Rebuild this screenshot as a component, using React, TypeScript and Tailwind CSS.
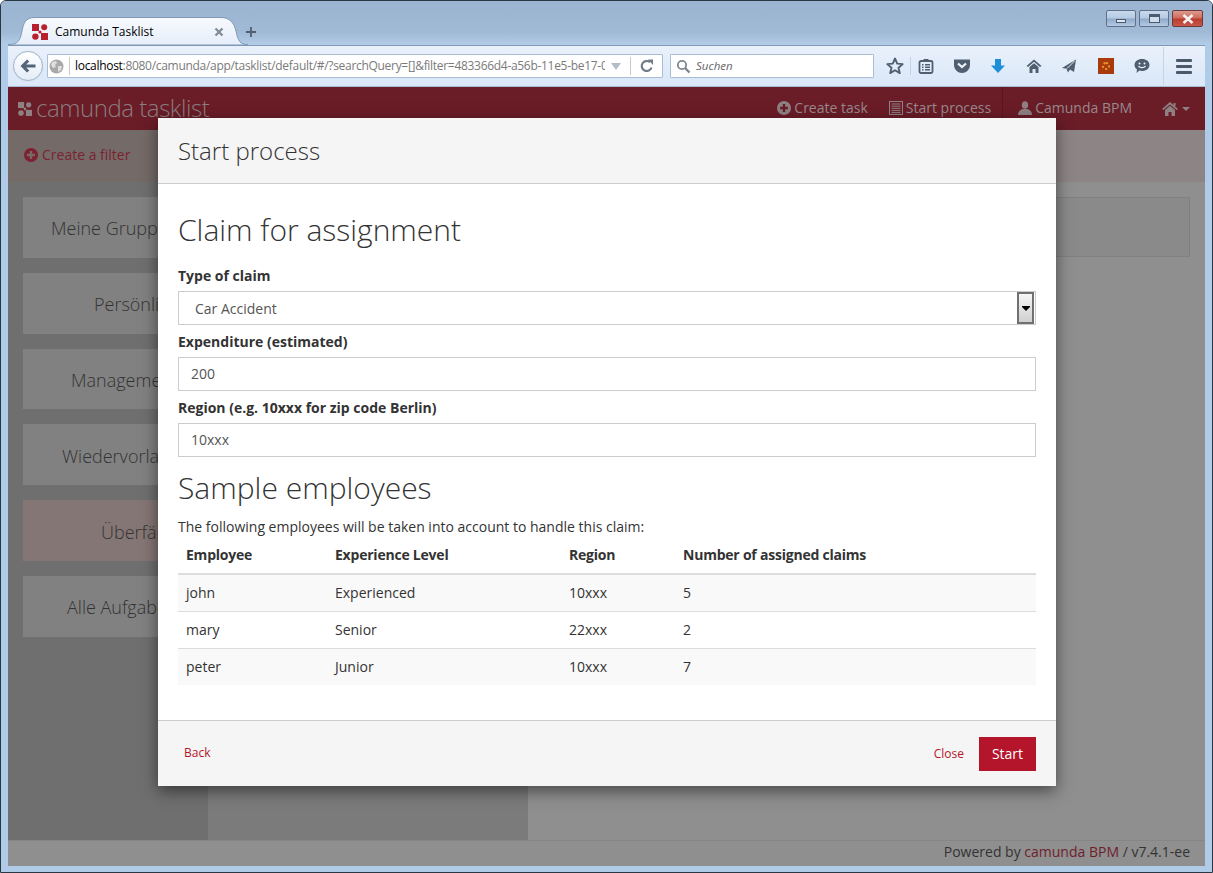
import React from "react";

const sans = "font-['Open_Sans','Noto_Sans',sans-serif]";

function Logo({ size, color }: { size: number; color: string }) {
  return (
    <svg width={size} height={size} viewBox="0 0 16 16" className="shrink-0">
      <rect x="0" y="0" width="7" height="7" fill={color} />
      <circle cx="12.2" cy="3.2" r="3" fill={color} />
      <circle cx="8" cy="8" r="1.6" fill={color} />
      <circle cx="3.4" cy="12.6" r="3.2" fill={color} />
      <rect x="9" y="9" width="7" height="7" fill={color} />
    </svg>
  );
}

function WinButton({ kind }: { kind: "min" | "max" | "close" }) {
  const bg =
    kind === "close"
      ? "bg-[linear-gradient(#dd9a8e_0%,#cf6a5a_48%,#b83c2e_52%,#c9584a_100%)] border-[#6c3a3a]"
      : "bg-[linear-gradient(#c9d9ec_0%,#b5cae2_48%,#8fa9c8_52%,#b3cae4_100%)] border-[#5f7089]";
  return (
    <div className={`flex items-center justify-center h-[17px] border rounded-[2px] ${bg} ${kind === "close" ? "w-[31px]" : "w-[30px]"}`}>
      {kind === "min" && <div className="w-[10px] h-[4px] mt-[4px] bg-[#dfe7f0] border border-[#4c5a6e]" />}
      {kind === "max" && <div className="w-[11px] h-[9px] bg-[#cfdcea] border border-[#4c5a6e] border-t-[3px]" />}
      {kind === "close" && (
        <svg width="12" height="10" viewBox="0 0 12 10">
          <path d="M1.5 1 L10.5 9 M10.5 1 L1.5 9" stroke="#f3f3f3" strokeWidth="2.6" />
        </svg>
      )}
    </div>
  );
}

function ToolIcons() {
  const c = "#4f5f70";
  return (
    <div className="flex items-center h-full relative">
      <svg width="18" height="18" viewBox="0 0 18 18" className="ml-[12px]">
        <path d="M9 1.5 L11.2 6.6 L16.7 7.1 L12.5 10.7 L13.8 16.1 L9 13.2 L4.2 16.1 L5.5 10.7 L1.3 7.1 L6.8 6.6 Z" fill="none" stroke={c} strokeWidth="1.9" strokeLinejoin="round" />
      </svg>
      <div className="w-px h-[18px] bg-[#c3d2e3] ml-[6px]" />
      <svg width="16" height="16" viewBox="0 0 16 16" className="ml-[7px]">
        <rect x="1.5" y="3" width="13" height="12" rx="1.5" fill="none" stroke={c} strokeWidth="1.8" />
        <rect x="5.5" y="1" width="5" height="3" fill={c} />
        <path d="M4 6.8h1.5M7 6.8h5M4 9.3h1.5M7 9.3h5M4 11.8h1.5M7 11.8h5" stroke={c} strokeWidth="1.4" />
      </svg>
      <svg width="18" height="16" viewBox="0 0 18 16" className="ml-[19px]">
        <path d="M1 1.5 H17 V7 C17 11.5 13 15 9 15 C5 15 1 11.5 1 7 Z" fill={c} />
        <path d="M5 5.5 L9 9 L13 5.5" fill="none" stroke="#eef4fb" strokeWidth="2.2" />
      </svg>
      <svg width="16" height="16" viewBox="0 0 16 16" className="ml-[19px]">
        <path d="M5 1 H11 V7.5 H15 L8 15 L1 7.5 H5 Z" fill="#1c8fd6" />
      </svg>
      <svg width="16" height="16" viewBox="0 0 16 16" className="ml-[20px]">
        <path d="M8 1.5 L15.5 8 L14 9 L8 3.8 L2 9 L0.5 8 Z" fill={c} />
        <path d="M3.5 9 L8 5.2 L12.5 9 V15 H9.5 V11 H6.5 V15 H3.5 Z" fill={c} />
      </svg>
      <svg width="16" height="16" viewBox="0 0 16 16" className="ml-[19px]">
        <path d="M15 1.5 L1 10 L5.5 10.8 L7 14.5 L9 11.5 L13 14 Z" fill={c} />
        <path d="M13.5 3 L6 10.5" stroke="#e4edf8" strokeWidth="1" />
      </svg>
      <div className="w-[16px] h-[16px] ml-[21px] bg-[#a83a0c] flex items-center justify-center">
        <div className="w-[8px] h-[8px] rounded-full border-2 border-dotted border-[#e8982c]" />
      </div>
      <svg width="16" height="16" viewBox="0 0 16 16" className="ml-[20px]">
        <path d="M8 1 C12.4 1 15.5 3.6 15.5 7 C15.5 10.4 12.4 13 8 13 C7 13 6.2 12.9 5.5 12.6 L2.5 15 L3 11.5 C1.4 10.4 0.5 8.8 0.5 7 C0.5 3.6 3.6 1 8 1 Z" fill={c} />
        <circle cx="5.5" cy="5.5" r="1" fill="#eef4fb" />
        <circle cx="10.5" cy="5.5" r="1" fill="#eef4fb" />
        <path d="M4.5 8 C6 10.2 10 10.2 11.5 8" fill="none" stroke="#eef4fb" strokeWidth="1.3" />
      </svg>
      <div className="w-px h-[38px] bg-[#c6d5e6] ml-[13px]" />
      <div className="flex flex-col gap-[3px] ml-[12px]">
        <div className="w-[16px] h-[3px] rounded-[1px] bg-[#4a5a6b]" />
        <div className="w-[16px] h-[3px] rounded-[1px] bg-[#4a5a6b]" />
        <div className="w-[16px] h-[3px] rounded-[1px] bg-[#4a5a6b]" />
      </div>
    </div>
  );
}

function Toolbar() {
  return (
    <div className="h-[42px] shrink-0 flex items-center relative bg-[linear-gradient(#eaf1fb,#d9e7f8)] border-t border-t-[#7e98b6] border-b border-b-[#a6bad3] text-[12px]">
      <div className="flex items-center w-[616px] h-[24px] ml-[39px] bg-white border border-[#a9bed5] rounded-[1px] relative shrink-0 overflow-hidden">
        <svg width="15" height="15" viewBox="0 0 15 15" className="ml-[1px] shrink-0">
          <circle cx="7.5" cy="7.5" r="7" fill="#a9a9a9" />
          <path d="M3 3 L7 2 L8 4 L6 6 L7 8 L4 9 L2 6 Z M9 7 L13 7 L12 11 L9 13 Z" fill="#dedede" />
        </svg>
        <div className="w-px h-[18px] bg-[#c9c9c9] ml-[5px] shrink-0" />
        <div className={`${sans} ml-[5px] w-[530px] whitespace-nowrap overflow-hidden text-[#7a7a7a] tracking-[-0.3px]`}>
          <span className="text-black">localhost</span>:8080/camunda/app/tasklist/default/#/?searchQuery=[]&amp;filter=483366d4-a56b-11e5-be17-0
        </div>
        <svg width="10" height="7" viewBox="0 0 10 7" className="ml-[6px] shrink-0">
          <path d="M0 0 H10 L5 7 Z" fill="#b5bec8" />
        </svg>
        <div className="w-px h-[18px] bg-[#c9c9c9] ml-[9px] shrink-0" />
        <svg width="14" height="14" viewBox="0 0 14 14" className="ml-[9px] shrink-0">
          <path d="M11.5 8.5 A5 5 0 1 1 10 3.2" fill="none" stroke="#6f7b87" strokeWidth="2.2" />
          <path d="M8 0.5 L13 0.5 L13 6 Z" fill="#6f7b87" />
        </svg>
      </div>
      <div className="flex items-center w-[204px] h-[24px] ml-[7px] bg-white border border-[#a9bed5] rounded-[1px] shrink-0">
        <svg width="15" height="15" viewBox="0 0 15 15" className="ml-[5px]">
          <circle cx="6" cy="6" r="4.2" fill="none" stroke="#7d8590" strokeWidth="1.8" />
          <path d="M9 9 L13.5 13.5" stroke="#7d8590" strokeWidth="2.4" />
        </svg>
        <span className={`${sans} italic text-[#666] ml-[5px] text-[11.5px]`}>Suchen</span>
      </div>
      <ToolIcons />
      <div className="absolute left-[5px] top-[5px] w-[30px] h-[30px] rounded-full bg-[linear-gradient(#ffffff,#e3ecf7)] border border-[#a4b5c8] flex items-center justify-center shadow-[0_0_1px_rgba(0,0,0,0.2)]">
        <svg width="16" height="14" viewBox="0 0 16 14">
          <path d="M7 0.5 L9.3 2.6 L6.2 5.4 H15.5 V8.6 H6.2 L9.3 11.4 L7 13.5 L0.5 7 Z" fill="#53657a" />
        </svg>
      </div>
    </div>
  );
}

function NavItem({ icon, children, className = "" }: { icon: React.ReactNode; children: React.ReactNode; className?: string }) {
  return (
    <div className={`flex items-center gap-[3px] text-[14px] text-[#98898c] pb-[2px] ${className}`}>
      {icon}
      <span>{children}</span>
    </div>
  );
}

function PlusCircle({ color, size = 14 }: { color: string; size?: number }) {
  return (
    <svg width={size} height={size} viewBox="0 0 14 14">
      <circle cx="7" cy="7" r="7" fill={color} />
      <path d="M7 3 V11 M3 7 H11" stroke="#6a1c27" strokeWidth="2.4" />
    </svg>
  );
}

function AppHeader() {
  const c = "#8f8183";
  return (
    <div className={`h-[43px] shrink-0 flex items-center bg-[#6a1c27] ${sans}`}>
      <div className="ml-[10px]">
        <Logo size={14} color={c} />
      </div>
      <span className="ml-[4px] text-[24px] font-light text-[#8b7d7f] leading-[41px] mb-[2px] tracking-[-0.45px]">camunda tasklist</span>
      <div className="ml-auto flex items-center h-full">
        <NavItem icon={<PlusCircle color={c} />}>Create task</NavItem>
        <NavItem
          className="ml-[21px]"
          icon={
            <svg width="14" height="14" viewBox="0 0 14 14">
              <rect x="0.5" y="0.5" width="13" height="13" fill="none" stroke={c} />
              <path d="M2.5 3h9M2.5 5.2h9M2.5 7.4h9M2.5 9.6h9M2.5 11.6h9" stroke={c} />
            </svg>
          }
        >
          Start process
        </NavItem>
        <div className="w-px h-full bg-[#5a1620] ml-[11px]" />
        <NavItem
          className="ml-[15px]"
          icon={
            <svg width="14" height="14" viewBox="0 0 14 14">
              <ellipse cx="7" cy="4" rx="3.2" ry="3.8" fill={c} />
              <path d="M0 14 C0 10 3 8.5 5 8 H9 C11 8.5 14 10 14 14 Z" fill={c} />
            </svg>
          }
        >
          Camunda BPM
        </NavItem>
        <svg width="16" height="14" viewBox="0 0 16 14" className="ml-[30px]">
          <path d="M8 0 L16 7 L14.6 8 L8 2.4 L1.4 8 L0 7 Z" fill={c} />
          <path d="M3 8 L8 3.8 L13 8 V14 H9.5 V10 H6.5 V14 H3 Z" fill={c} />
          <rect x="11.5" y="1" width="2" height="3" fill={c} />
        </svg>
        <svg width="8" height="4" viewBox="0 0 8 4" className="ml-[4px] mr-[15px]">
          <path d="M0 0 H8 L4 4 Z" fill={c} />
        </svg>
      </div>
    </div>
  );
}

function SideItem({ label, tint, pad }: { label: string; tint?: boolean; pad: string }) {
  return (
    <div className={`h-[60.8px] shrink-0 flex items-center pt-[3px] overflow-hidden text-[18px] font-light text-[#333] whitespace-nowrap ${pad} ${tint ? "bg-[#847674]" : "bg-[#818181]"}`}>
      {label}
    </div>
  );
}

function Page() {
  return (
    <div className={`flex-1 flex flex-col min-h-0 bg-[#8f8f8f] ${sans}`}>
      <AppHeader />
      <div className="h-[52px] shrink-0 flex">
        <div className="w-[200px] bg-[#746a68] flex items-center pl-[16px] pb-[3px] gap-[4px] text-[14px] text-[#7a2431]">
          <svg width="14" height="14" viewBox="0 0 14 14">
            <circle cx="7" cy="7" r="7" fill="#7e2030" />
            <path d="M7 3 V11 M3 7 H11" stroke="#746a68" strokeWidth="2.4" />
          </svg>
          <span>Create a filter</span>
        </div>
        <div className="flex-1 bg-[#8d8585]" />
      </div>
      <div className="flex-1 flex min-h-0">
        <div className="w-[200px] bg-[#6f6f6f] flex flex-col gap-[15px] px-[15px] pt-[15px]">
          <SideItem label="Meine Gruppen" pad="pl-[28px]" />
          <SideItem label="Persönliche" pad="pl-[71px]" />
          <SideItem label="Management" pad="pl-[48px]" />
          <SideItem label="Wiedervorlage" pad="pl-[39px]" />
          <SideItem label="Überfällig" pad="pl-[78px]" tint />
          <SideItem label="Alle Aufgaben" pad="pl-[44px]" />
        </div>
        <div className="w-[320px] bg-[#7b7b7b]" />
        <div className="flex-1 bg-[#8f8f8f] pl-[15px] pr-[15px] pt-[15px]">
          <div className="h-[60px] border border-[#808080] bg-[#8a8a8a]" />
        </div>
      </div>
      <div className="h-[26px] shrink-0 bg-[#8f8f8f] border-t border-[#868686] flex items-center justify-end pr-[15px] pb-[5px] text-[14px] text-[#333]">
        <span>
          Powered by <span className="text-[#6e1e2b]">camunda BPM</span> / v7.4.1-ee
        </span>
      </div>
    </div>
  );
}

function Field({ label, children }: { label: string; children: React.ReactNode }) {
  return (
    <div className="flex flex-col gap-[5px] mb-[7px]">
      <div className="h-[20px] leading-[20px] text-[14px] font-bold text-[#333]">{label}</div>
      {children}
    </div>
  );
}

const rows = [
  ["john", "Experienced", "10xxx", "5"],
  ["mary", "Senior", "22xxx", "2"],
  ["peter", "Junior", "10xxx", "7"],
];

function Modal() {
  const input = "h-[34px] border border-[#ccc] bg-white flex items-center text-[14px] text-[#555]";
  return (
    <div className={`absolute left-[150px] top-[31px] w-[898px] h-[668px] flex flex-col bg-white text-[#333] shadow-[0_5px_15px_rgba(0,0,0,0.5)] ${sans}`}>
      <div className="h-[66px] shrink-0 bg-[#f5f5f5] border-b border-[#ccc] flex items-center px-[20px] text-[24px] font-light">
        Start process
      </div>
      <div className="flex-1 px-[20px] pt-[29px]">
        <div className="h-[33px] leading-[33px] text-[30px] font-light mb-[20px]">Claim for assignment</div>
        <Field label="Type of claim">
          <div className={`${input} pl-[16px] pr-px justify-between`}>
            <span>Car Accident</span>
            <div className="w-[17px] h-[32px] border-2 border-[#707070] bg-[linear-gradient(#f6f6f6,#cfcfcf)] flex items-center justify-center">
              <svg width="8" height="5" viewBox="0 0 8 5">
                <path d="M0 0 H8 V1 L4 5 L0 1 Z" fill="#000" />
              </svg>
            </div>
          </div>
        </Field>
        <Field label="Expenditure (estimated)">
          <div className={`${input} pl-[12px] pb-[2px]`}>200</div>
        </Field>
        <Field label="Region (e.g. 10xxx for zip code Berlin)">
          <div className={`${input} pl-[12px] pb-[2px]`}>10xxx</div>
        </Field>
        <div className="h-[33px] leading-[33px] text-[30px] font-light mt-[14px]">Sample employees</div>
        <div className="h-[20px] leading-[20px] mt-[13px] text-[14px]">The following employees will be taken into account to handle this claim:</div>
        <table className="w-full table-fixed text-[14px]">
          <thead>
            <tr className="h-[37px] border-b-2 border-[#ddd] text-left tracking-[-0.22px]">
              <th className="w-[149px] px-[8px] pb-[2px] font-bold">Employee</th>
              <th className="w-[234px] px-[8px] pb-[2px] font-bold">Experience Level</th>
              <th className="w-[114px] px-[8px] pb-[2px] font-bold">Region</th>
              <th className="px-[8px] pb-[2px] font-bold">Number of assigned claims</th>
            </tr>
          </thead>
          <tbody>
            {rows.map((r, i) => (
              <tr key={r[0]} className={`h-[37px] ${i > 0 ? "border-t border-[#ddd]" : ""} ${i % 2 === 0 ? "bg-[#f9f9f9]" : "bg-white"}`}>
                {r.map((c) => (
                  <td key={c} className="px-[8px]">{c}</td>
                ))}
              </tr>
            ))}
          </tbody>
        </table>
      </div>
      <div className="h-[66px] shrink-0 bg-[#f5f5f5] border-t border-[#ccc] flex items-start justify-between pl-[26px] pr-[20px] pt-[16px]">
        <span className="text-[12px] text-[#b5152b] leading-[18px] mt-[7px]">Back</span>
        <div className="flex items-start gap-[15px]">
          <span className="text-[12px] text-[#b5152b] leading-[18px] mt-[8px]">Close</span>
          <div className="w-[57px] h-[34px] bg-[#b5152b] text-white text-[14px] flex items-center justify-center pb-[2px]">Start</div>
        </div>
      </div>
    </div>
  );
}

export default function App() {
  return (
    <div className="w-[1213px] h-[873px] flex flex-col bg-[#b0cbe8] border border-[#2b3644] rounded-t-[6px] overflow-hidden">
      <div className="h-[44px] shrink-0 flex items-end relative bg-[linear-gradient(#9ab4d1_0%,#a0b9d5_70%,#b3cde9_100%)]">
        <div className="ml-[7px] w-[240px] h-[28px] relative flex items-center pl-[24px] pr-[24px] pt-[1px] shrink-0">
          <svg width="240" height="28" viewBox="0 0 240 28" className="absolute left-0 top-0">
            <defs>
              <linearGradient id="tabfill" x1="0" y1="0" x2="0" y2="1">
                <stop offset="0" stopColor="#f7fafe" />
                <stop offset="1" stopColor="#e6eefa" />
              </linearGradient>
            </defs>
            <path d="M0 27.5 C10 27.5 12 24 14 14 C15.5 6 17.5 0.5 27 0.5 H213 C222 0.5 226 6 228 14 C230 24 232 27.5 240 27.5 V28 H0 Z" fill="url(#tabfill)" stroke="#7e98b6" strokeWidth="1" />
          </svg>
          <div className="relative flex items-center w-full">
            <Logo size={16} color="#b9202f" />
            <span className={`${sans} ml-[7px] text-[12px] text-black`}>Camunda Tasklist</span>
            <svg width="10" height="10" viewBox="0 0 10 10" className="ml-auto">
              <path d="M1.5 1.5 L8.5 8.5 M8.5 1.5 L1.5 8.5" stroke="#7f8a96" strokeWidth="2.2" />
            </svg>
          </div>
        </div>
        <svg width="12" height="12" viewBox="0 0 12 12" className="mb-[7px] -ml-[3px] shrink-0">
          <path d="M6 1 V11 M1 6 H11" stroke="#4f5f70" strokeWidth="1.8" />
        </svg>
        <div className="ml-auto mr-[9px] self-start mt-[9px] flex gap-[3px]">
          <WinButton kind="min" />
          <WinButton kind="max" />
          <WinButton kind="close" />
        </div>
      </div>
      <div className="flex-1 flex flex-col mx-[7px] mb-[6px] min-h-0 relative">
        <Toolbar />
        <div className="flex-1 min-h-0 relative flex flex-col">
          <Page />
          <Modal />
        </div>
      </div>
    </div>
  );
}
